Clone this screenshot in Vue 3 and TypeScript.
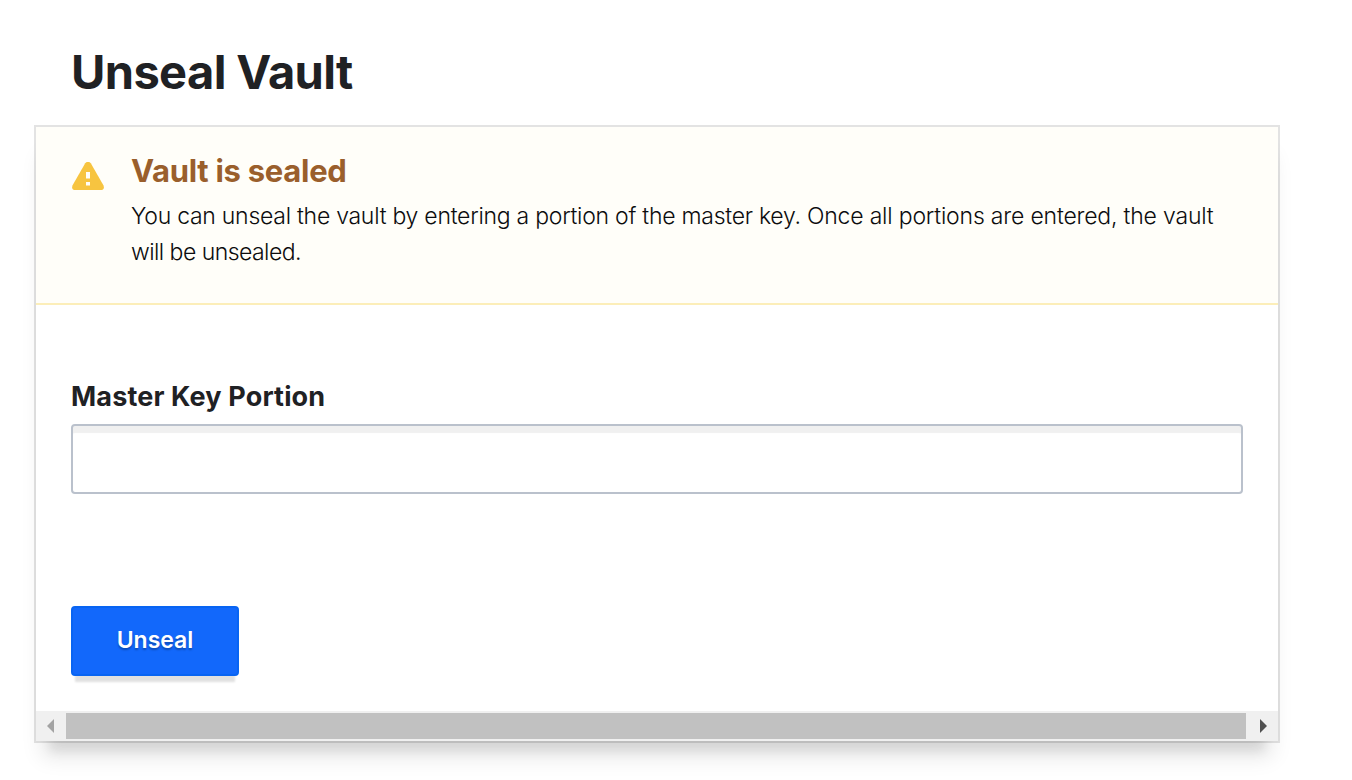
<script setup lang="ts">
import { ref } from 'vue'

const keyPortion = ref('')
</script>

<template>
  <main class="page">
    <h1 class="title"><span>Unseal Vault</span></h1>
    <form class="box" @submit.prevent>
      <section class="message">
        <svg class="alert" viewBox="0 0 32 28" width="32" height="28" aria-hidden="true">
          <path fill="#f7c440" d="M13.2 1.3Q16-1.9 18.8 1.3L31.4 23.2Q33.2 28 28.4 28H3.6Q-1.2 28 .6 23.2Z" />
          <path fill="#fffef9" d="M14 10h4v6.5h-4zM14 20h4v3.5h-4z" />
        </svg>
        <div class="copy">
          <h2><span>Vault is sealed</span></h2>
          <p><span class="line first">You can unseal the vault by entering a portion of the master key. <span class="once">Once all portions are entered, the vault</span></span> <span class="line second">will be unsealed.</span></p>
        </div>
      </section>
      <section class="field">
        <label for="key"><span>Master Key Portion</span></label>
        <input id="key" v-model="keyPortion" type="password" autocomplete="off" />
      </section>
      <div class="actions">
        <button type="submit"><span>Unseal</span></button>
      </div>
      <div class="scrollbar" aria-hidden="true">
        <svg width="30" height="26" viewBox="0 0 30 26"><path fill="#a3a3a3" d="M11 13l7-7v14z" /></svg>
        <div class="thumb"></div>
        <svg width="32" height="26" viewBox="0 0 32 26"><path fill="#505050" d="M21 13l-7-7v14z" /></svg>
      </div>
    </form>
  </main>
</template>

<style>
body {
  background: #fff;
  overflow: hidden;
}
</style>

<style scoped>
* {
  box-sizing: border-box;
}
.page {
  height: 780px;
  padding: 44px 74px 0 36px;
  overflow: hidden;
  font-family: Inter, "Liberation Sans", sans-serif;
}
h1,
h2,
p {
  margin: 0;
}
.title {
  height: 83px;
  padding-left: 35px;
  font-size: 47px;
  line-height: 56px;
  font-weight: 700;
  letter-spacing: -0.62px;
  color: #1f2124;
}
.box {
  display: flex;
  flex-direction: column;
  height: 614px;
  background: #fff;
  box-shadow:
    0 0 0 2px rgba(0, 0, 0, 0.11),
    0 24px 10px -14px rgba(0, 0, 0, 0.08),
    0 22px 20px -6px rgba(0, 0, 0, 0.1);
}
.message {
  display: flex;
  height: 178px;
  padding: 24px 36px 0;
  border-bottom: 2px solid #fceeb9;
  background: #fffef9;
}
.alert {
  flex: none;
  margin: 11px 27px 0 0;
}
.copy {
  flex: 1;
  white-space: nowrap;
}
h2 {
  height: 47px;
  font-size: 31px;
  line-height: 40px;
  font-weight: 700;
  letter-spacing: -0.28px;
  color: #9a5f2c;
}
p {
  font-size: 23px;
  line-height: 36px;
  font-weight: 350;
  color: #0c0c0e;
}
.line {
  display: table;
}
.first {
  letter-spacing: -0.26px;
}
.once {
  letter-spacing: -0.19px;
}
.second {
  letter-spacing: -0.54px;
}
.field {
  padding: 72px 35px 0;
}
label {
  display: block;
  height: 47px;
  font-size: 27px;
  line-height: 40px;
  font-weight: 700;
  letter-spacing: 0.15px;
  color: #1f2124;
}
input {
  display: block;
  width: 100%;
  height: 70px;
  padding: 0 16px;
  border: 2px solid #bac1cc;
  border-radius: 4px;
  outline: none;
  background: #fff;
  box-shadow: inset 0 8px 1px -1px #f0f0f0;
  font: 24px Inter, sans-serif;
}
.actions {
  padding: 112px 35px 0;
}
button {
  display: block;
  width: 168px;
  height: 70px;
  padding: 0 0 2px;
  border: 2px solid #0864f2;
  border-radius: 4px;
  background: #1268fb;
  color: #fff;
  box-shadow: 0 10px 2px -4px rgba(0, 0, 0, 0.12);
  font: 600 23px/30px Inter, sans-serif;
  text-shadow: 0 2px 2px rgba(0, 0, 0, 0.28);
}
.scrollbar {
  display: flex;
  height: 30px;
  margin-top: auto;
  padding: 2px 0;
  background: #f0f0f0;
}
.scrollbar svg {
  flex: none;
}
.thumb {
  flex: 1;
  background: #c1c1c1;
}
</style>
